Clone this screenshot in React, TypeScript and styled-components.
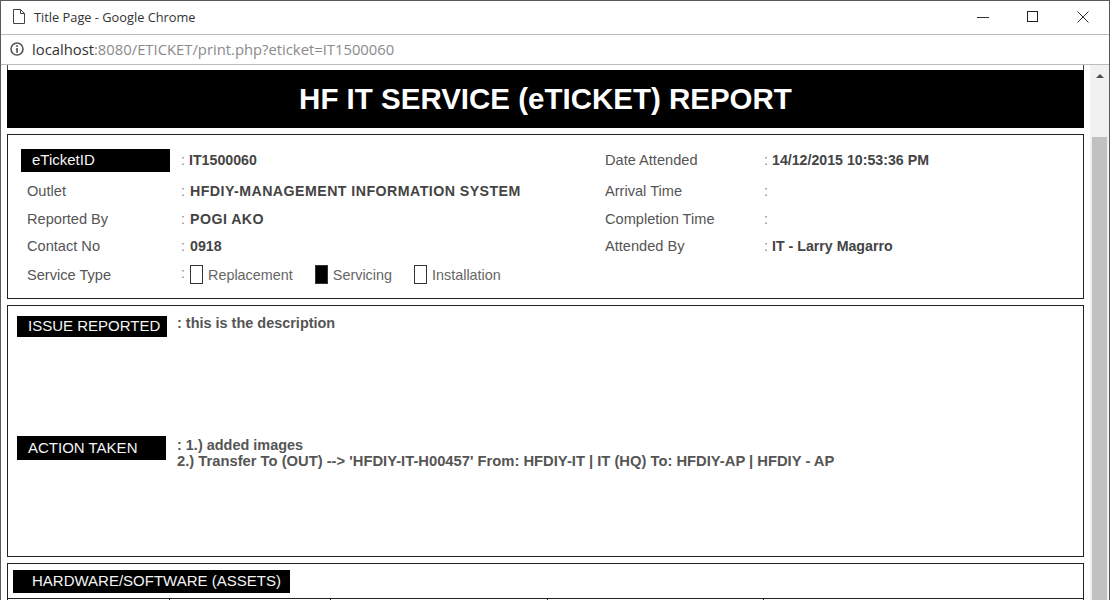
import { FC } from "react";
import styled, { createGlobalStyle } from "styled-components";

const GlobalStyle = createGlobalStyle`
  html, body {
    margin: 0;
    padding: 0;
    background: #fff;
  }
  * {
    box-sizing: border-box;
  }
`;

const Window = styled.div`
  width: 1110px;
  height: 600px;
  display: flex;
  flex-direction: column;
  overflow: hidden;
  background: #fff;
  border: 1px solid #5a5a5a;
  border-bottom: 0;
  font-family: "Liberation Sans", Arial, sans-serif;
`;

const TitleBar = styled.div`
  height: 34px;
  flex-shrink: 0;
  display: flex;
  align-items: center;
  padding: 0 0 2px 12px;
  border-bottom: 1px solid #bdbdbd;
`;

const TitleText = styled.span`
  margin-left: 9px;
  font-family: "Open Sans", sans-serif;
  font-size: 12.8px;
  color: #333;
`;

const WindowControls = styled.div`
  margin-left: auto;
  padding-right: 1px;
  display: flex;
`;

const ControlButton = styled.div`
  width: 50px;
  height: 31px;
  display: flex;
  align-items: center;
  justify-content: center;
`;

const AddressBar = styled.div`
  height: 30px;
  flex-shrink: 0;
  display: flex;
  align-items: center;
  padding: 0 0 1px 9px;
  border-bottom: 1px solid #bdbdbd;
`;

const Url = styled.div`
  margin-left: 8px;
  font-family: "Open Sans", sans-serif;
  font-size: 14.8px;
  color: #8a8a8a;
`;

const UrlHost = styled.span`
  color: #333;
`;

const Viewport = styled.div`
  flex: 1;
  min-height: 0;
  display: flex;
`;

const Page = styled.div`
  width: 1083px;
  padding-left: 6px;
  overflow: hidden;
  flex-shrink: 0;
`;

const Scrollbar = styled.div`
  margin-left: 6px;
  width: 19px;
  background: #f1f1f1;
  display: flex;
  flex-direction: column;
  align-items: center;
  padding-top: 9px;
`;

const ScrollArrow = styled.div`
  width: 0;
  height: 0;
  border-left: 4px solid transparent;
  border-right: 4px solid transparent;
  border-bottom: 4px solid #505050;
`;

const ScrollThumb = styled.div`
  margin-top: 59px;
  width: 15px;
  flex: 1;
  background: #c1c1c1;
`;

const HeaderBox = styled.div`
  padding-top: 5px;
  border-left: 1px solid #444;
  border-right: 1px solid #444;
`;

const Banner = styled.div`
  height: 58px;
  margin: 0 -1px;
  background: #000;
  color: #fff;
  display: flex;
  align-items: center;
  justify-content: center;
  font-size: 29.5px;
  font-weight: 700;
`;

const Panel = styled.section`
  border: 1px solid #222;
`;

const InfoPanel = styled(Panel)`
  margin-top: 6px;
  height: 165px;
  padding: 10px 0 0 13px;
  display: grid;
  grid-template-columns: 160px 424px 159px 1fr;
  grid-template-rows: 30px 31px 26px 27px 31px;
  align-items: center;
`;

const ReportPanel = styled(Panel)`
  margin-top: 6px;
  height: 252px;
  padding: 10px 0 0 9px;
`;

const AssetsPanel = styled(Panel)`
  margin-top: 6px;
  height: 80px;
  padding-top: 6px;
`;

const Badge = styled.div<{ $width: number; $inset: number; $height?: number }>`
  width: ${(p) => p.$width}px;
  height: ${(p) => p.$height ?? 23}px;
  padding-left: ${(p) => p.$inset}px;
  background: #000;
  color: #f4f4f4;
  font-size: 15px;
  line-height: ${(p) => (p.$height ?? 23) - 1}px;
  white-space: nowrap;
`;

const Label = styled.div<{ $right?: boolean }>`
  padding-left: ${(p) => (p.$right ? 0 : 6)}px;
  font-size: 14.6px;
  color: #555;
`;

const Value = styled.div`
  display: flex;
  font-size: 14.2px;
  color: #555;
  white-space: nowrap;
`;

const Colon = styled.span<{ $narrow?: boolean }>`
  width: ${(p) => (p.$narrow ? 8 : 9)}px;
  flex-shrink: 0;
  color: #888;
`;

const Strong = styled.b<{ $spaced?: boolean }>`
  color: #444;
  letter-spacing: ${(p) => (p.$spaced ? "0.45px" : "0")};
`;

const Options = styled.div`
  display: flex;
  gap: 22px;
  font-size: 14.4px;
`;

const Option = styled.div`
  display: flex;
  align-items: center;
  gap: 5px;
  color: #666;
`;

const CheckBox = styled.span<{ $checked?: boolean }>`
  width: 13px;
  height: 19px;
  border: 1px solid #333;
  background: ${(p) => (p.$checked ? "#000" : "#fff")};
`;

const ReportRow = styled.div<{ $height: number }>`
  height: ${(p) => p.$height}px;
  display: grid;
  grid-template-columns: 160px 1fr;
  align-items: start;
`;

const ReportText = styled.div<{ $offset: number }>`
  margin-top: ${(p) => p.$offset}px;
  font-size: 14.46px;
  font-weight: 700;
  line-height: 16px;
  color: #555;
  white-space: nowrap;
`;

const LongLine = styled.span`
  font-size: 14.76px;
`;

const AssetsBadgeWrap = styled.div`
  padding-left: 5px;
`;

const AssetsTable = styled.div`
  margin-top: 5px;
  display: grid;
  grid-template-columns: 161px 161px 217px 216px 1fr;
  border-top: 1px solid #222;
`;

const AssetsCell = styled.div`
  height: 40px;
  border-left: 1px solid #222;
  &:first-child {
    border-left: 0;
  }
`;

const FileIcon: FC = () => (
  <svg width="12" height="15" viewBox="0 0 12 15" fill="none" stroke="#444" strokeWidth="1">
    <path d="M0.5 0.5H7.5L11.5 4.5V14.5H0.5Z" />
    <path d="M7.5 0.5V4.5H11.5" />
  </svg>
);

const InfoIcon: FC = () => (
  <svg width="14" height="14" viewBox="0 0 14 14" fill="none">
    <circle cx="7" cy="7" r="6" stroke="#555" strokeWidth="1.6" />
    <rect x="6.2" y="3.2" width="1.7" height="1.7" fill="#555" />
    <rect x="6.2" y="6" width="1.7" height="4.8" fill="#555" />
  </svg>
);

const MinimizeIcon: FC = () => (
  <svg width="12" height="12" viewBox="0 0 12 12" stroke="#333">
    <path d="M0 6.5H12" />
  </svg>
);

const MaximizeIcon: FC = () => (
  <svg width="12" height="12" viewBox="0 0 12 12" fill="none" stroke="#222">
    <rect x="0.5" y="0.5" width="10" height="10" />
  </svg>
);

const CloseIcon: FC = () => (
  <svg width="12" height="12" viewBox="0 0 12 12" stroke="#333">
    <path d="M0.5 0.5L11.5 11.5M11.5 0.5L0.5 11.5" />
  </svg>
);

type FieldProps = {
  value?: string;
  spaced?: boolean;
  narrow?: boolean;
};

const Field: FC<FieldProps> = ({ value, spaced, narrow }) => (
  <Value>
    <Colon $narrow={narrow}>:</Colon>
    {value && <Strong $spaced={spaced}>{value}</Strong>}
  </Value>
);

const App: FC = () => {
  return (
    <>
      <GlobalStyle />
      <Window>
        <TitleBar>
          <FileIcon />
          <TitleText>Title Page - Google Chrome</TitleText>
          <WindowControls>
            <ControlButton>
              <MinimizeIcon />
            </ControlButton>
            <ControlButton>
              <MaximizeIcon />
            </ControlButton>
            <ControlButton>
              <CloseIcon />
            </ControlButton>
          </WindowControls>
        </TitleBar>
        <AddressBar>
          <InfoIcon />
          <Url>
            <UrlHost>localhost</UrlHost>:8080/ETICKET/print.php?eticket=IT1500060
          </Url>
        </AddressBar>
        <Viewport>
          <Page>
            <HeaderBox>
              <Banner>HF IT SERVICE (eTICKET) REPORT</Banner>
            </HeaderBox>

            <InfoPanel>
              <Badge $width={149} $inset={11}>eTicketID</Badge>
              <Field value="IT1500060" narrow />
              <Label $right>Date Attended</Label>
              <Field value="14/12/2015 10:53:36 PM" narrow />

              <Label>Outlet</Label>
              <Field value="HFDIY-MANAGEMENT INFORMATION SYSTEM" spaced />
              <Label $right>Arrival Time</Label>
              <Field />

              <Label>Reported By</Label>
              <Field value="POGI AKO" spaced />
              <Label $right>Completion Time</Label>
              <Field />

              <Label>Contact No</Label>
              <Field value="0918" />
              <Label $right>Attended By</Label>
              <Field value="IT - Larry Magarro" narrow />

              <Label>Service Type</Label>
              <Value>
                <Colon>:</Colon>
                <Options>
                  <Option>
                    <CheckBox />
                    Replacement
                  </Option>
                  <Option>
                    <CheckBox $checked />
                    Servicing
                  </Option>
                  <Option>
                    <CheckBox />
                    Installation
                  </Option>
                </Options>
              </Value>
            </InfoPanel>

            <ReportPanel>
              <ReportRow $height={120}>
                <Badge $width={150} $inset={11} $height={21}>ISSUE REPORTED</Badge>
                <ReportText $offset={-1}>: this is the description</ReportText>
              </ReportRow>
              <ReportRow $height={120}>
                <Badge $width={149} $inset={11} $height={24}>ACTION TAKEN</Badge>
                <ReportText $offset={1}>
                  : 1.) added images
                  <br />
                  <LongLine>2.) Transfer To (OUT) --&gt; 'HFDIY-IT-H00457' From: HFDIY-IT | IT (HQ) To: HFDIY-AP | HFDIY - AP</LongLine>
                </ReportText>
              </ReportRow>
            </ReportPanel>

            <AssetsPanel>
              <AssetsBadgeWrap>
                <Badge $width={277} $inset={19}>HARDWARE/SOFTWARE (ASSETS)</Badge>
              </AssetsBadgeWrap>
              <AssetsTable>
                <AssetsCell />
                <AssetsCell />
                <AssetsCell />
                <AssetsCell />
                <AssetsCell />
              </AssetsTable>
            </AssetsPanel>
          </Page>
          <Scrollbar>
            <ScrollArrow />
            <ScrollThumb />
          </Scrollbar>
        </Viewport>
      </Window>
    </>
  );
};

export default App;
